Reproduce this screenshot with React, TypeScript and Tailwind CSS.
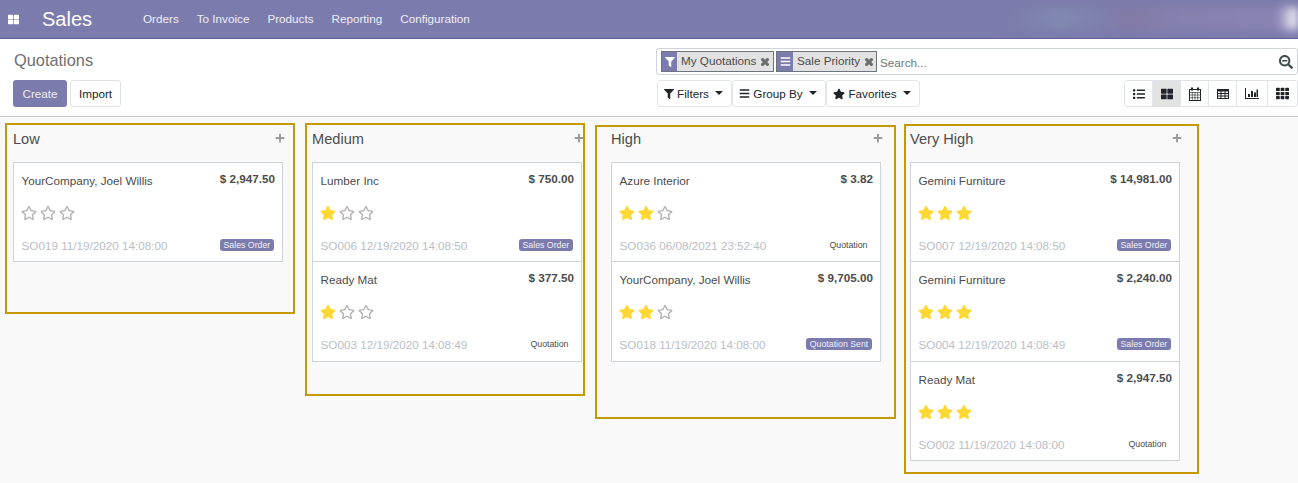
import React from "react";
import {
  FaBars,
  FaFilter,
  FaList,
  FaPlus,
  FaRegStar,
  FaSearchMinus,
  FaStar,
  FaTh,
  FaThLarge,
  FaTimes,
} from "react-icons/fa";

type Card = {
  name: string;
  amount: string;
  stars: number;
  ref: string;
  status: string;
  filled: boolean;
};

const columns: { title: string; cards: Card[] }[] = [
  {
    title: "Low",
    cards: [
      { name: "YourCompany, Joel Willis", amount: "$ 2,947.50", stars: 0, ref: "SO019 11/19/2020 14:08:00", status: "Sales Order", filled: true },
    ],
  },
  {
    title: "Medium",
    cards: [
      { name: "Lumber Inc", amount: "$ 750.00", stars: 1, ref: "SO006 12/19/2020 14:08:50", status: "Sales Order", filled: true },
      { name: "Ready Mat", amount: "$ 377.50", stars: 1, ref: "SO003 12/19/2020 14:08:49", status: "Quotation", filled: false },
    ],
  },
  {
    title: "High",
    cards: [
      { name: "Azure Interior", amount: "$ 3.82", stars: 2, ref: "SO036 06/08/2021 23:52:40", status: "Quotation", filled: false },
      { name: "YourCompany, Joel Willis", amount: "$ 9,705.00", stars: 2, ref: "SO018 11/19/2020 14:08:00", status: "Quotation Sent", filled: true },
    ],
  },
  {
    title: "Very High",
    cards: [
      { name: "Gemini Furniture", amount: "$ 14,981.00", stars: 3, ref: "SO007 12/19/2020 14:08:50", status: "Sales Order", filled: true },
      { name: "Gemini Furniture", amount: "$ 2,240.00", stars: 3, ref: "SO004 12/19/2020 14:08:49", status: "Sales Order", filled: true },
      { name: "Ready Mat", amount: "$ 2,947.50", stars: 3, ref: "SO002 11/19/2020 14:08:00", status: "Quotation", filled: false },
    ],
  },
];

const Stars = ({ count }: { count: number }) => (
  <div className="flex gap-[3px] h-[16px] items-center -ml-[0.5px]">
    {[0, 1, 2].map((i) =>
      i < count ? (
        <FaStar key={i} className="w-[16px] h-[16px] text-[#fdd835]" />
      ) : (
        <FaRegStar key={i} className="w-[16px] h-[16px] text-[#b5b0b0]" />
      )
    )}
  </div>
);

const KanbanCard = ({ card }: { card: Card }) => (
  <div className="h-[99px] nth-[2]:h-[100px] border-b border-[#ced4da] pl-[7.5px] pr-[7px] pt-[8px]">
    <div className="flex justify-between items-start">
      <span className="text-[11.7px] leading-[20px] text-[#4c4c4c]">{card.name}</span>
      <span className="text-[11.7px] leading-[15px] font-bold text-[#4c4c4c]">{card.amount}</span>
    </div>
    <div className="mt-[14px]">
      <Stars count={card.stars} />
    </div>
    <div className="mt-[16px] flex justify-between items-center">
      <span className="text-[11.7px] leading-[18px] text-[#b9bec6]">{card.ref}</span>
      {card.filled ? (
        <span className="-mt-[2px] text-[8.78px] leading-[12px] px-[3.75px] rounded-[3px] bg-[#7c7bad] text-[#f0f0f6] mr-[1px]">{card.status}</span>
      ) : (
        <span className="-mt-[2px] text-[8.78px] leading-[12px] px-[4px] text-[#4c4c4c] mr-[1.5px]">{card.status}</span>
      )}
    </div>
  </div>
);

const ViewButton = ({ children, active, wide }: { children: React.ReactNode; active?: boolean; wide?: boolean }) => (
  <div className={`${wide ? "w-[31px]" : "w-[28px]"} last:w-[29px] h-[25px] flex items-center justify-center border-r border-[#e2e6ea] last:border-r-0 ${active ? "bg-[#e2e2e2]" : "bg-white"}`}>
    {children}
  </div>
);

const Caret = () => <span className="ml-[6px] mb-[1px] w-0 h-0 border-x-[4px] border-x-transparent border-t-[4px] border-t-[#212529]" />;

const CalendarIcon = () => (
  <svg width="12" height="14" viewBox="0 0 12 14" fill="none" stroke="currentColor" strokeWidth="1">
    <rect x="0.5" y="2.5" width="11" height="11" fill="#fff" />
    <path d="M0 5.5h12M0 8h12M0 10.7h12M3.3 5v9M6 5v9M8.7 5v9" strokeWidth="0.6" />
    <path d="M3 0.5v3M9 0.5v3" strokeWidth="2" />
  </svg>
);

const TableIcon = () => (
  <svg width="12" height="10" viewBox="0 0 12 10" fill="none" stroke="currentColor">
    <rect x="0.5" y="0.5" width="11" height="9" />
    <path d="M0 1.5h12" strokeWidth="2" />
    <path d="M0 4.5h12M0 7h12M4 2v8M8 2v8" strokeWidth="1" />
  </svg>
);

const ChartIcon = () => (
  <svg width="14" height="11" viewBox="0 0 14 11" fill="currentColor">
    <path d="M0 0h1v10h13v1H0z" />
    <path d="M3 6h2v3H3zM6 3h2v6H6zM9 4.5h2V9H9zM11.5 1.5h1.5V9h-1.5z" />
  </svg>
);

export default function App() {
  return (
    <div className="relative w-[1298px] h-[483px] overflow-hidden bg-[#f9f9f9] font-['Liberation_Sans',Arial,sans-serif]">
      <nav className="relative h-[39px] bg-[#7c7bad] border-b border-[#5f5e97] flex items-center overflow-hidden">
        <FaThLarge className="ml-[8px] w-[11px] h-[11px] text-white" />
        <span className="ml-[23px] text-[20px] text-white leading-none">Sales</span>
        <div className="ml-[51px] flex gap-[18px] text-[11.7px] text-[#eeeef6]">
          <span>Orders</span>
          <span>To Invoice</span>
          <span>Products</span>
          <span>Reporting</span>
          <span>Configuration</span>
        </div>
        {/* blurred user area */}
        <div className="absolute right-0 top-[7px] w-[290px] h-[23px] blur-[4px] bg-[linear-gradient(90deg,#7c7bad_0%,#8089b0_18%,#7f7fae_32%,#827aa4_42%,#8580ae_55%,#8a84b3_93%,#ffffff_100%)]" />
      </nav>

      <header className="h-[78px] bg-white border-b border-[#cccccc] pl-[13px] flex justify-between">
        <div>
          <h1 className="mt-[11px] ml-[1px] text-[16.38px] leading-[21px] text-[#6f6f6f]">Quotations</h1>
          <div className="mt-[9px] flex gap-[3px] text-[11.7px]">
            <button className="w-[54px] h-[27px] rounded-[3px] bg-[#7c7bad] text-[#eeeef6]">Create</button>
            <button className="w-[51px] h-[27px] rounded-[3px] bg-white border border-[#dee2e6] text-[#212529]">Import</button>
          </div>
        </div>
        <div className="w-[642px]">
          <div className="mt-[9px] h-[27px] border border-[#ced4da] rounded-[3px] flex items-center pl-[4px] pr-[4px] text-[11.7px]">
            <div className="h-[21px] w-[113px] shrink-0 flex items-center border border-[#6c757d] bg-[#e2e2e2] text-[#4c4c4c]">
              <span className="w-[15px] h-full bg-[#7c7bad] flex items-center justify-center">
                <FaFilter className="w-[10px] h-[10px] text-white" />
              </span>
              <span className="ml-[4px] -mt-[1px] whitespace-nowrap">My Quotations</span>
              <FaTimes className="ml-[4px] w-[10px] h-[10px] text-[#6c6c6c] stroke-[60]" />
            </div>
            <div className="ml-[2px] h-[21px] w-[101px] shrink-0 flex items-center border border-[#6c757d] bg-[#e2e2e2] text-[#4c4c4c]">
              <span className="w-[16px] h-full bg-[#7c7bad] flex items-center justify-center">
                <FaBars className="w-[11px] h-[11px] text-white" />
              </span>
              <span className="ml-[4px] -mt-[1px] whitespace-nowrap">Sale Priority</span>
              <FaTimes className="ml-[4px] w-[10px] h-[10px] text-[#6c6c6c] stroke-[60]" />
            </div>
            <span className="ml-[3px] mt-[2px] text-[#6f7780] flex-1">Search...</span>
            <FaSearchMinus className="w-[14px] h-[14px] text-[#3f4a4a]" />
          </div>
          <div className="mt-[5px] pl-[1px] flex justify-between">
            <div className="flex text-[11.7px] text-[#212529]">
              {[
                { label: "Filters", icon: <FaFilter className="shrink-0 w-[10px] h-[10px] mr-[3px] text-[#212529]" />, w: "w-[75px]" },
                { label: "Group By", icon: <FaBars className="shrink-0 w-[11px] h-[11px] mr-[3px] text-[#212529]" />, w: "w-[94px]" },
                { label: "Favorites", icon: <FaStar className="shrink-0 w-[12px] h-[12px] mr-[3px] text-[#212529]" />, w: "w-[94px]" },
              ].map((b) => (
                <div key={b.label} className={`${b.w} h-[27px] pr-[2px] whitespace-nowrap bg-white border border-[#e2e6ea] rounded-[3px] flex items-center justify-center`}>
                  {b.icon}
                  {b.label}
                  <Caret />
                </div>
              ))}
            </div>
            <div className="flex h-[27px] border border-[#dee2e6] rounded-[3px] overflow-hidden text-[#212529]">
              <ViewButton><FaList className="w-[12px] h-[12px]" /></ViewButton>
              <ViewButton active><FaThLarge className="w-[12px] h-[12px]" /></ViewButton>
              <ViewButton><CalendarIcon /></ViewButton>
              <ViewButton><TableIcon /></ViewButton>
              <ViewButton wide><ChartIcon /></ViewButton>
              <ViewButton><FaTh className="w-[13px] h-[13px]" /></ViewButton>
            </div>
          </div>
        </div>
      </header>

      <main className="flex gap-[29px] pl-[13px]">
        {columns.map((col) => (
          <section key={col.title} className="w-[270px]">
            <div className="h-[45px] flex justify-between pt-[13px] relative">
              <span className="text-[14.6px] leading-[18px] text-[#4c4c4c]">{col.title}</span>
              <FaPlus className="mt-[3px] mr-[-1.5px] w-[10px] h-[10px] text-[#9a9a9a]" />
            </div>
            <div className="bg-white border border-b-0 border-[#ced4da]">
              {col.cards.map((card, i) => (
                <KanbanCard key={i} card={card} />
              ))}
            </div>
          </section>
        ))}
      </main>

      {/* highlight boxes drawn over the board */}
      <div className="absolute left-[5px] top-[123px] w-[290px] h-[191px] border-2 border-[#c49a00]" />
      <div className="absolute left-[305px] top-[123px] w-[280px] h-[273px] border-2 border-[#c49a00]" />
      <div className="absolute left-[595px] top-[125px] w-[301px] h-[294px] border-2 border-[#c49a00]" />
      <div className="absolute left-[904px] top-[124px] w-[295px] h-[350px] border-2 border-[#c49a00]" />
    </div>
  );
}
